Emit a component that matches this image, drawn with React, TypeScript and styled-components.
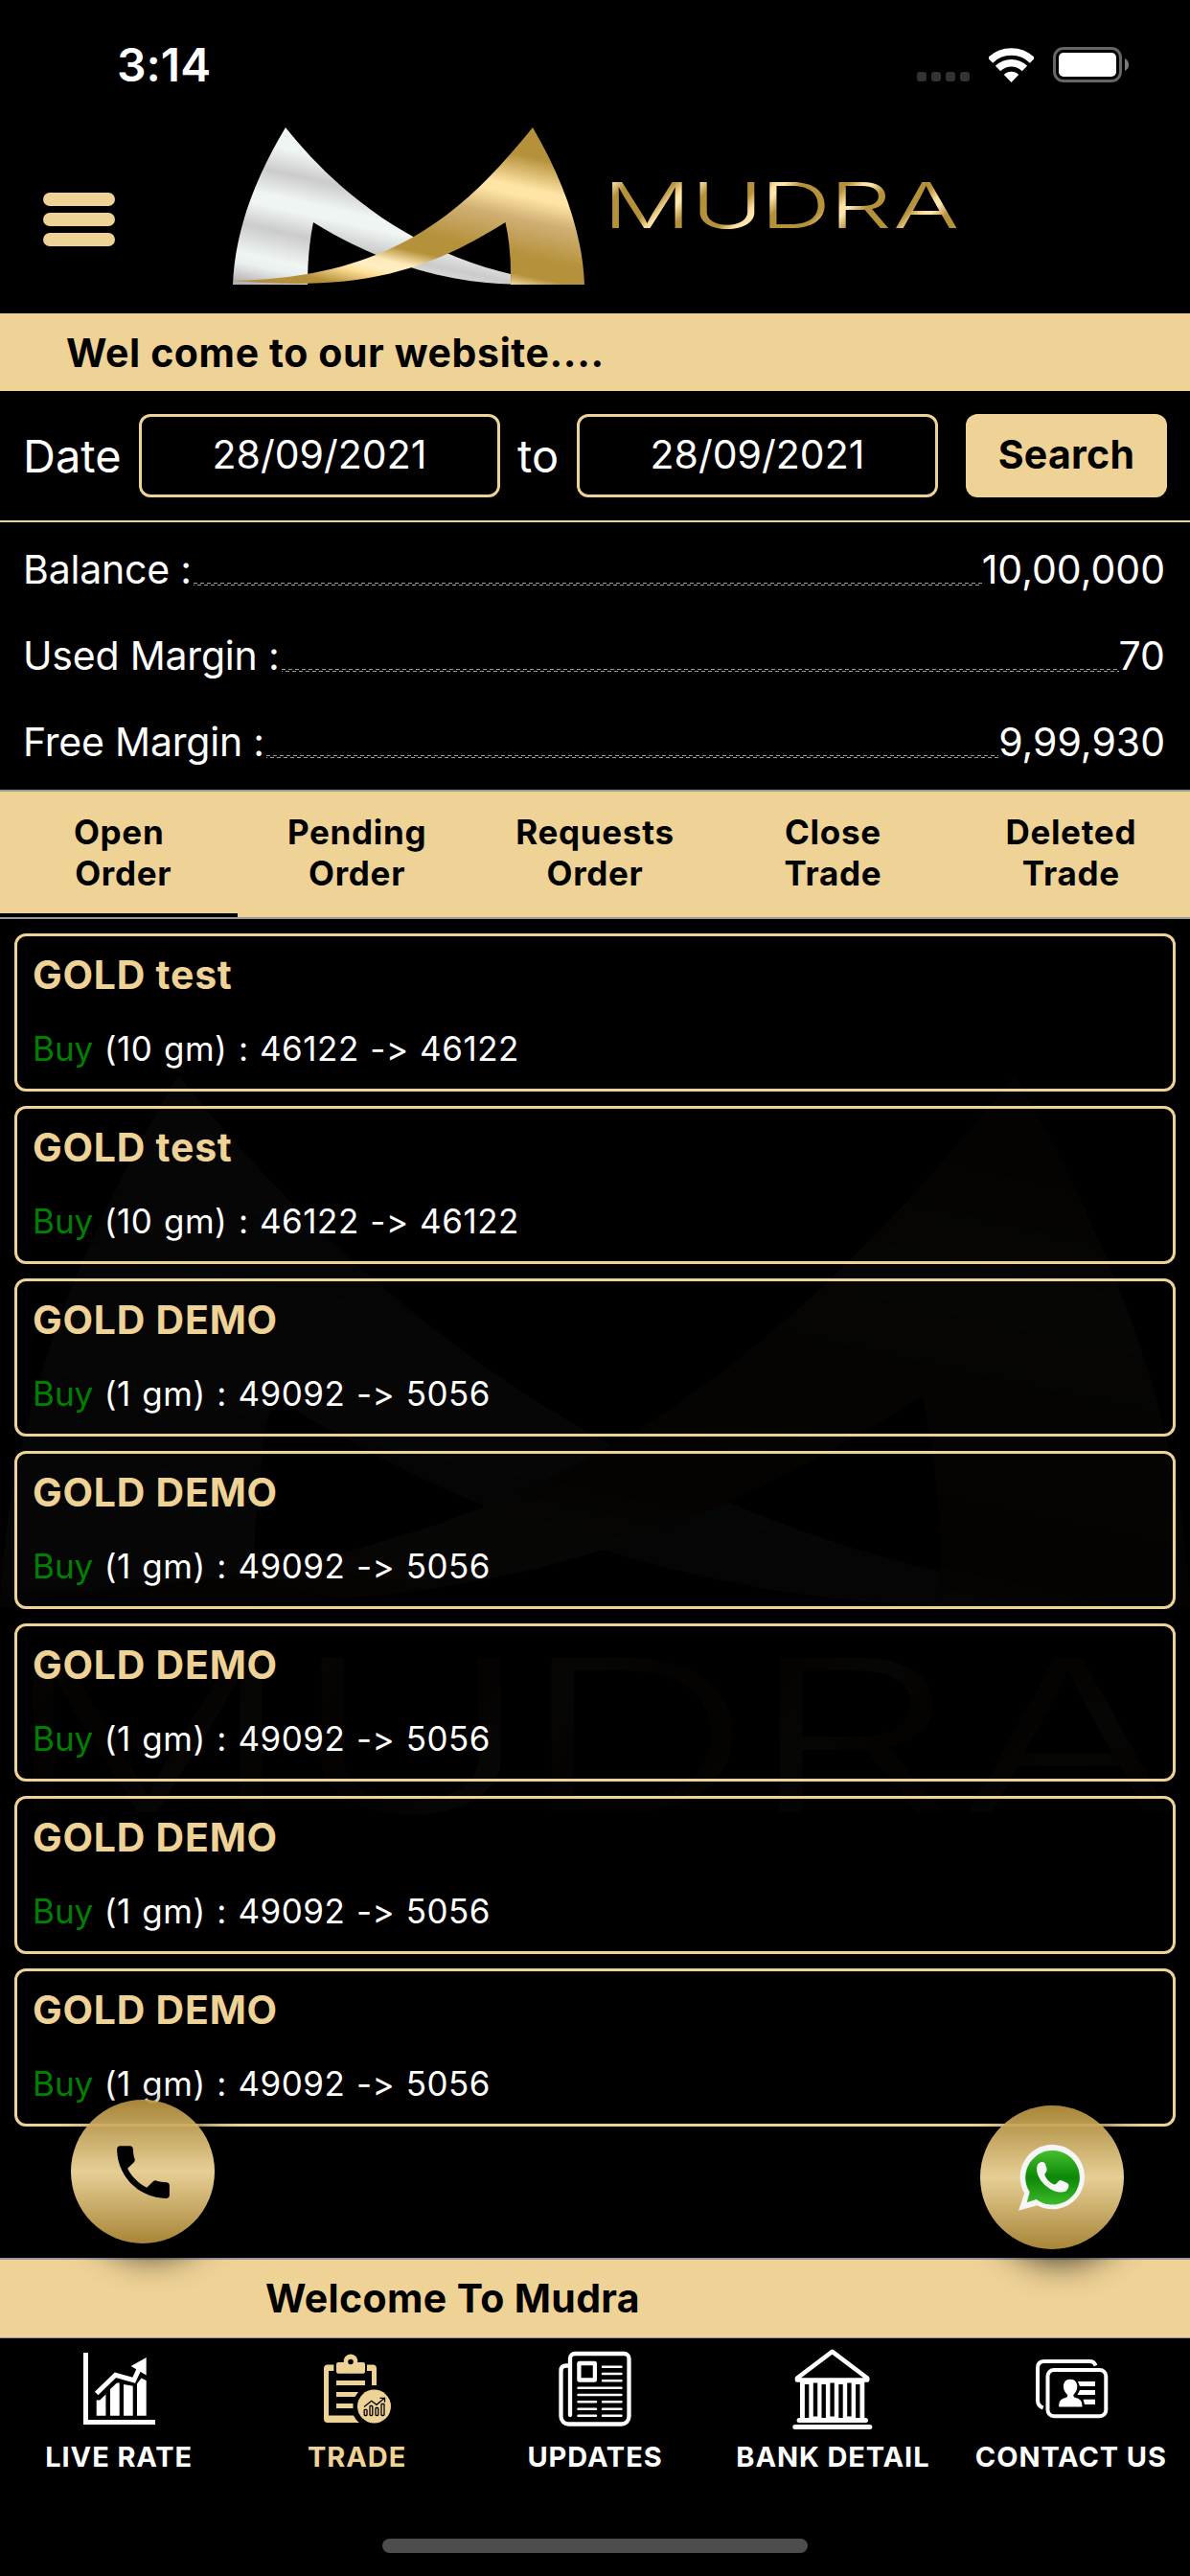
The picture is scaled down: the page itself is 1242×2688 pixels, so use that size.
import { ReactNode } from "react";
import styled, { createGlobalStyle } from "styled-components";

const GlobalStyle = createGlobalStyle`
  * {
    box-sizing: border-box;
  }

  body {
    margin: 0;
    background-color: #000000;
    color: #ffffff;
    font-family: Inter, "Liberation Sans", sans-serif;
    font-feature-settings: "calt" 0;
  }
`;

const gold = "#efd296";

const Wrapper = styled.div`
  width: 1242px;
  height: 2688px;
  overflow: hidden;

  display: flex;
  flex-direction: column;
`;

const StatusBar = styled.div`
  height: 133px;
  padding: 2px 63px 0 122px;

  display: flex;
  align-items: center;
  justify-content: space-between;
`;

const Time = styled.span`
  font-size: 48px;
  font-weight: 600;
`;

const StatusIcons = styled.div`
  display: flex;
  align-items: center;
  gap: 20px;
`;

const SignalDots = styled.div`
  display: flex;
  gap: 5px;
  padding-top: 25px;
`;

const SignalDot = styled.span`
  width: 10px;
  height: 10px;
  border-radius: 3px;
  background-color: #333333;
`;

const Header = styled.header`
  height: 194px;
  padding-left: 45px;

  display: flex;
  align-items: flex-start;
`;

const MenuButton = styled.button`
  width: 75px;
  margin: 68px 123px 0 0;
  padding: 0;
  border: none;
  background: none;

  display: flex;
  flex-direction: column;
  gap: 7px;
`;

const MenuBar = styled.span`
  width: 100%;
  height: 14px;
  border-radius: 7px;
  background-color: ${gold};
`;

const Notice = styled.div`
  height: 81px;
  padding-left: 69px;
  background-color: ${gold};
  color: #000000;

  display: flex;
  align-items: center;

  font-size: 41px;
  font-weight: 700;
  letter-spacing: 0.6px;
`;

const SearchRow = styled.div`
  height: 137px;
  padding: 0 24px;
  border-bottom: 2px solid ${gold};

  display: flex;
  align-items: center;
`;

const SearchLabel = styled.span<{ $width: number }>`
  width: ${(props) => props.$width}px;
  font-size: 47px;
`;

const ToLabel = styled(SearchLabel)`
  padding-left: 18px;
`;

const DateBox = styled.div`
  width: 377px;
  height: 87px;
  padding-bottom: 3px;
  border: 3px solid ${gold};
  border-radius: 12px;

  display: flex;
  align-items: center;
  justify-content: center;

  font-size: 41px;
`;

const SearchBtn = styled.button`
  width: 210px;
  height: 87px;
  margin-left: auto;
  padding: 0 0 3px;
  border: none;
  border-radius: 12px;
  background-color: ${gold};

  color: #000000;
  font-family: inherit;
  font-size: 41px;
  font-weight: 700;
  letter-spacing: 0.3px;
`;

const Summary = styled.div`
  height: 279px;
  padding: 4px 26px 0 24px;
`;

const SummaryRow = styled.div`
  height: 90px;

  display: flex;
  align-items: center;

  font-size: 41px;
`;

const SummaryLabel = styled.span`
  letter-spacing: -0.2px;
`;

const Leader = styled.span`
  flex: 1;
  height: 3px;
  margin: 31px 0 0 2px;
  background-image: linear-gradient(90deg, #999999 4px, transparent 4px),
    linear-gradient(90deg, #999999 4px, transparent 4px);
  background-size: 7px 1px;
  background-position: 0 0, 4px 2px;
  background-repeat: repeat-x;
`;

const Tabs = styled.nav`
  height: 135px;
  border-top: 2px solid #999999;
  border-bottom: 2px solid #999999;
  background-color: ${gold};

  display: grid;
  grid-template-columns: repeat(5, 1fr);
`;

const Tab = styled.div<{ $active: boolean }>`
  border-bottom: 4px solid ${(props) => (props.$active ? "#000000" : gold)};

  display: flex;
  align-items: center;
  justify-content: center;

  color: #000000;
  font-size: 35px;
  font-weight: 700;
  letter-spacing: 0.7px;
  line-height: 43px;
  text-align: center;
  white-space: pre;
`;

const Orders = styled.main`
  position: relative;
  height: 1397px;
  padding: 15px;

  display: flex;
  flex-direction: column;
  gap: 15px;
`;

const Watermark = styled.div`
  position: absolute;
  top: 163px;
  left: 0;
  opacity: 0.022;
`;

const Order = styled.article`
  position: relative;
  height: 165px;
  padding: 15px 16px 0;
  border: 3px solid ${gold};
  border-radius: 12px;
`;

const OrderTitle = styled.h2`
  margin: 0 0 30px;
  color: ${gold};
  font-size: 41px;
  font-weight: 700;
  letter-spacing: 0.75px;
  line-height: 50px;
`;

const OrderText = styled.p`
  margin: 0;
  font-size: 35px;
  line-height: 44px;
  letter-spacing: 0.5px;
  word-spacing: 1.2px;
`;

const Side = styled.span`
  color: #008000;
  letter-spacing: 0;
`;

const FloatingBtn = styled.button<{ $left: number; $top: number }>`
  position: absolute;
  left: ${(props) => props.$left}px;
  top: ${(props) => props.$top}px;
  z-index: 1;
  width: 150px;
  height: 150px;
  padding: 0;
  border: none;
  border-radius: 50%;
  background: linear-gradient(
    rgba(180, 144, 60, 0.93),
    rgba(248, 222, 160, 0.93) 50%,
    rgba(180, 144, 60, 0.93)
  );
  box-shadow: 9px 12px 36px rgba(0, 0, 0, 0.8);

  display: flex;
  align-items: center;
  justify-content: center;
`;

const Footer = styled.div`
  height: 84px;
  padding-left: 277px;
  border-top: 2px solid #999999;
  border-bottom: 1px solid #999999;
  background-color: ${gold};

  color: #000000;
  font-size: 41px;
  font-weight: 700;
  letter-spacing: 0.35px;
  line-height: 80px;
`;

const BottomNav = styled.nav`
  height: 209px;
  padding-top: 11px;

  display: grid;
  grid-template-columns: repeat(5, 1fr);
`;

const NavItem = styled.div<{ $active?: boolean }>`
  color: ${(props) => (props.$active ? gold : "#ffffff")};

  display: flex;
  flex-direction: column;
  align-items: center;
  gap: 11px;
`;

const NavLabel = styled.span`
  font-size: 29px;
  font-weight: 700;
  line-height: 36px;
  letter-spacing: 0.9px;
  white-space: nowrap;
`;

const HomeIndicator = styled.div`
  width: 444px;
  height: 15px;
  margin: 0 auto;
  border-radius: 8px;
  background-color: #4d4d4d;
`;

const ChartIcon = () => (
  <svg width="84" height="84" viewBox="0 0 84 84">
    <path fill="currentColor" d="M5 4h5v70h70v5H5z" />
    <path
      fill="currentColor"
      d="M18.7 53.5h3.5l6.2-6v22.2h-9.7zM33 42l7-6.5h2.7v34.2H33zM47 37l9.7 1.8v30.9H47zM61 36.5l4.5-6 5.2 2.5v36.7H61z"
    />
    <path
      fill="none"
      stroke="currentColor"
      strokeWidth="5"
      d="M18.7 46.5 38.5 27.3l19.2 5.4L64.5 18"
    />
    <path fill="currentColor" d="M70.7 9v18.5L54.7 18z" />
  </svg>
);

const TradeIcon = () => (
  <svg width="84" height="84" viewBox="0 0 84 84">
    <g fill="currentColor">
      <path d="M17.4 16.5H11q-4 0-4 4V73q0 4 4 4h33q-4-3-6-7.5H12V23h5.4zM52 16.5h6q4 0 4 4V38h-5V23h-5z" />
      <path
        fillRule="evenodd"
        d="M22 14h5.8a7.3 7.3 0 1 1 14.4 0H48q2 0 2 2v7.7q0 2-2 2H22q-2 0-2-2V16q0-2 2-2zm13-3.3a2.8 2.8 0 1 0 0 5.6 2.8 2.8 0 0 0 0-5.6z"
      />
      <path d="M20 33h30v5H20zM20 45h23l-3.5 5H20zM20 57h17.5v5H20z" />
      <circle cx="59.5" cy="60" r="17.5" />
    </g>
    <g fill="none" stroke="#000000" strokeWidth="1.3">
      <path d="m49 60.5 7.7-6.2 5.3 4L69.5 52M65.5 51.3h5v4.4" />
      <rect x="49.2" y="63.3" width="2.8" height="6.2" rx="0.8" />
      <rect x="55" y="59.5" width="2.8" height="10" rx="0.8" />
      <rect x="61" y="61.5" width="2.8" height="8" rx="0.8" />
      <rect x="67" y="57.5" width="3" height="12" rx="0.8" />
    </g>
  </svg>
);

const NewsIcon = () => (
  <svg
    width="84"
    height="84"
    viewBox="0 0 84 84"
    fill="none"
    stroke="currentColor"
    strokeLinecap="round"
  >
    <path
      strokeWidth="4.3"
      d="M16 69V10a5 5 0 0 1 5-5h51.5a5 5 0 0 1 5 5v60.5a8 8 0 0 1-8 8H14.5a8 8 0 0 1-8-8V23q0-5.5 5.5-5.5h3"
    />
    <rect x="25.4" y="15" width="16.5" height="17.5" strokeWidth="4.3" rx="0.5" />
    <path
      strokeWidth="2.5"
      d="M50 18.7h19.5M50 26h19.5M50 33.3h19.5M24.5 40.7h45M24.5 48h45M24.5 55.3h18.5M50 55.3h19.5M24.5 62.7h18.5M50 62.7h19.5M24.5 69.8h18.5M50 69.8h19.5"
    />
  </svg>
);

const bankSlots = [12.9, 21.8, 30.5, 39.4, 48.3, 57.2, 66.1];

const BankIcon = () => (
  <svg width="84" height="84" viewBox="0 0 84 84">
    <path
      fill="none"
      stroke="currentColor"
      strokeWidth="4.6"
      strokeLinejoin="round"
      d="M41.6 2.8 5 30.5v2h73.2v-2z"
    />
    <path fill="currentColor" d="M8 33h67.3v40H8z" />
    {bankSlots.map((x, i) => (
      <rect
        key={x}
        x={x}
        y={i % 2 === 0 ? 37 : 35.5}
        width="4.4"
        height="35"
        fill="#000000"
      />
    ))}
    <rect x="4.6" y="72" width="74.4" height="5" rx="2.5" fill="currentColor" />
    <rect x="0.3" y="79" width="83" height="5" rx="2.5" fill="currentColor" />
  </svg>
);

const ContactIcon = () => (
  <svg width="84" height="84" viewBox="0 0 84 84">
    <g fill="none" stroke="currentColor" strokeWidth="4">
      <path d="M67.5 17.5Q66 13 61.5 13H14q-7 0-7 7v33.5q0 6 5.7 8" />
      <rect x="17.5" y="22" width="60.8" height="48.3" rx="6.5" />
    </g>
    <g fill="currentColor">
      <path d="M41 31.7c5 0 7.3 3.5 7.3 7.6 0 3.7-2 6.8-4 8.7 0 2 .7 2.6 3.2 3.3 4.5 1.2 6 3.5 6 9.2H29.2c0-5.7 1.5-8 6-9.2 2.5-.7 3-1.3 3-3.3-2.2-1.9-4.3-5-4.3-8.7 0-4.1 2.2-7.6 7.1-7.6z" />
      <path d="M49 34h18v5H51zM51 43h16v5H48.5zM54.5 52.7H67V58H56z" />
    </g>
  </svg>
);

const PhoneIcon = () => (
  <svg width="73" height="73" viewBox="0 0 24 24" fill="#000000">
    <path d="M6.62 10.79c1.44 2.83 3.76 5.14 6.59 6.59l2.2-2.2c.27-.27.67-.36 1.02-.24 1.12.37 2.33.57 3.57.57.55 0 1 .45 1 1V20c0 .55-.45 1-1 1-9.39 0-17-7.61-17-17 0-.55.45-1 1-1h3.5c.55 0 1 .45 1 1 0 1.25.2 2.45.57 3.57.11.35.03.74-.25 1.02l-2.2 2.2z" />
  </svg>
);

const WhatsappIcon = () => (
  <svg width="70" height="70" viewBox="0 0 70 70">
    <defs>
      <linearGradient id="waGreen" x1="0" y1="0" x2="0" y2="1">
        <stop offset="0" stopColor="#45c02e" />
        <stop offset="0.5" stopColor="#0c8707" />
        <stop offset="1" stopColor="#3dbb2a" />
      </linearGradient>
    </defs>
    <path
      fill="#f6f6f6"
      d="M0 69.7 6.2 51.5A33.7 33.7 0 1 1 19.5 64.3z"
    />
    <path
      fill="url(#waGreen)"
      d="M8.7 61.3l3-10.8A28.3 28.3 0 1 1 18.7 58z"
    />
    <path
      fill="#f6f6f6"
      d="M24 19Q19 20 19 26C19 38 33 51 45 50.5Q52 50 52.5 43.5 52.5 41.5 50 40.5L45 38.2Q43 37.5 41.5 39.5L39 42Q37.5 43 35 41.5 29.5 38 27.5 33 26.8 31.5 28.5 30 30 28 29.5 26L28 21Q27 18.5 24 19Z"
    />
  </svg>
);

const WifiIcon = () => (
  <svg width="47" height="36" viewBox="0 0 47 36">
    <clipPath id="wifiWedge">
      <path d="M23.5 36-3 8.5V-6h53V8.5z" />
    </clipPath>
    <g clipPath="url(#wifiWedge)" fill="none" stroke="#ffffff" strokeWidth="7.5">
      <circle cx="23.5" cy="35.5" r="31.5" />
      <circle cx="23.5" cy="35.5" r="19.8" />
      <circle cx="23.5" cy="35.5" r="5.4" strokeWidth="10.8" />
    </g>
  </svg>
);

const BatteryIcon = () => (
  <svg width="80" height="37" viewBox="0 0 80 37">
    <rect
      x="1.5"
      y="1.5"
      width="69"
      height="34"
      rx="9.5"
      fill="none"
      stroke="#666666"
      strokeWidth="3"
    />
    <rect x="6" y="6" width="60" height="25" rx="5" fill="#ffffff" />
    <path fill="#7a7a7a" d="M75 12q4 2 4 6.5T75 25z" />
  </svg>
);

const LogoMark = ({ id }: { id: string }) => (
  <>
    <defs>
      <linearGradient
        id={`${id}Silver`}
        gradientUnits="userSpaceOnUse"
        x1="55"
        y1="0"
        x2="19"
        y2="164"
      >
        <stop offset="0" stopColor="#eff5f3" />
        <stop offset="0.13" stopColor="#eff5f3" />
        <stop offset="0.28" stopColor="#cbcbcb" />
        <stop offset="0.43" stopColor="#eff5f3" />
        <stop offset="0.5" stopColor="#eff5f3" />
        <stop offset="0.64" stopColor="#cbcbcb" />
        <stop offset="0.82" stopColor="#eff5f3" />
        <stop offset="0.88" stopColor="#eaf0ee" />
        <stop offset="1" stopColor="#b7b0b8" />
      </linearGradient>
      <linearGradient
        id={`${id}Gold`}
        gradientUnits="userSpaceOnUse"
        x1="313"
        y1="0"
        x2="266"
        y2="213"
      >
        <stop offset="0" stopColor="#b5913b" />
        <stop offset="0.14" stopColor="#b5913b" />
        <stop offset="0.29" stopColor="#ffe5a5" />
        <stop offset="0.33" stopColor="#ffe5a5" />
        <stop offset="0.44" stopColor="#d0af74" />
        <stop offset="0.61" stopColor="#b5913b" />
        <stop offset="0.7" stopColor="#b5913b" />
        <stop offset="0.77" stopColor="#feeab8" />
        <stop offset="0.81" stopColor="#ffefc6" />
        <stop offset="0.85" stopColor="#ffdf98" />
        <stop offset="0.93" stopColor="#b5913b" />
      </linearGradient>
    </defs>
    <path
      fill={`url(#${id}Silver)`}
      d="M55 0C95 50 170 125 290 153V163.5C220 162 150 140 84 99Q78 128 78 164H0C2 110 22 55 55 0Z"
    />
    <path
      fill={`url(#${id}Gold)`}
      d="M313 0C240 90 165 157 0 160 130 171 200 152 284.5 99Q291 128 290 164H367C365 110 345 55 313 0Z"
    />
  </>
);

const Wordmark = ({ id }: { id: string }) => (
  <>
    <defs>
      <linearGradient
        id={`${id}Word`}
        gradientUnits="userSpaceOnUse"
        x1="0"
        y1="-48"
        x2="42"
        y2="-22"
        spreadMethod="repeat"
      >
        <stop offset="0" stopColor="#ffe9b0" />
        <stop offset="0.2" stopColor="#b5913b" />
        <stop offset="0.72" stopColor="#b5913b" />
        <stop offset="0.9" stopColor="#ffe0a0" />
        <stop offset="1" stopColor="#ffe9b0" />
      </linearGradient>
    </defs>
    <text
      transform="scale(1.57 1)"
      x="-5.5 53 99 145 187.5"
      fontFamily="Inter"
      fontSize="65.3"
      fontWeight="300"
      fill={`url(#${id}Word)`}
    >
      MUDRA
    </text>
  </>
);

const HeaderLogo = () => (
  <svg width="800" height="165" viewBox="0 0 800 165">
    <LogoMark id="head" />
    <g transform="translate(395 105)">
      <Wordmark id="head" />
    </g>
  </svg>
);

const WatermarkLogo = () => (
  <svg width="1242" height="780" viewBox="0 0 1242 780">
    <g transform="scale(3.384)">
      <LogoMark id="mark" />
    </g>
    <g transform="translate(30 769) scale(3.3 3.4)">
      <Wordmark id="mark" />
    </g>
  </svg>
);

const summary = [
  { label: "Balance :", value: "10,00,000" },
  { label: "Used Margin :", value: "70" },
  { label: "Free Margin :", value: "9,99,930" },
];

const tabs = [
  "Open\n Order",
  "Pending\nOrder",
  "Requests\nOrder",
  "Close\nTrade",
  "Deleted\nTrade",
];

const goldTest = { title: "GOLD test", detail: "(10 gm) : 46122 -> 46122" };
const goldDemo = { title: "GOLD DEMO", detail: "(1 gm) : 49092 -> 5056" };
const orders = [
  goldTest,
  goldTest,
  goldDemo,
  goldDemo,
  goldDemo,
  goldDemo,
  goldDemo,
];

type NavEntry = {
  label: string;
  icon: ReactNode;
  active?: boolean;
};

const navItems: NavEntry[] = [
  { label: "LIVE RATE", icon: <ChartIcon /> },
  { label: "TRADE", icon: <TradeIcon />, active: true },
  { label: "UPDATES", icon: <NewsIcon /> },
  { label: "BANK DETAIL", icon: <BankIcon /> },
  { label: "CONTACT US", icon: <ContactIcon /> },
];

export default function App() {
  return (
    <Wrapper>
      <GlobalStyle />
      <StatusBar>
        <Time>3:14</Time>
        <StatusIcons>
          <SignalDots>
            <SignalDot />
            <SignalDot />
            <SignalDot />
            <SignalDot />
          </SignalDots>
          <WifiIcon />
          <BatteryIcon />
        </StatusIcons>
      </StatusBar>
      <Header>
        <MenuButton aria-label="Menu">
          <MenuBar />
          <MenuBar />
          <MenuBar />
        </MenuButton>
        <HeaderLogo />
      </Header>
      <Notice>Wel come to our website....</Notice>
      <SearchRow>
        <SearchLabel $width={121}>Date</SearchLabel>
        <DateBox>28/09/2021</DateBox>
        <ToLabel $width={80}>to</ToLabel>
        <DateBox>28/09/2021</DateBox>
        <SearchBtn>Search</SearchBtn>
      </SearchRow>
      <Summary>
        {summary.map((row) => (
          <SummaryRow key={row.label}>
            <SummaryLabel>{row.label}</SummaryLabel>
            <Leader />
            <span>{row.value}</span>
          </SummaryRow>
        ))}
      </Summary>
      <Tabs>
        {tabs.map((tab, index) => (
          <Tab key={tab} $active={index === 0}>
            {tab}
          </Tab>
        ))}
      </Tabs>
      <Orders>
        <Watermark>
          <WatermarkLogo />
        </Watermark>
        {orders.map((order, index) => (
          <Order key={index}>
            <OrderTitle>{order.title}</OrderTitle>
            <OrderText>
              <Side>Buy</Side> {order.detail}
            </OrderText>
          </Order>
        ))}
        <FloatingBtn $left={74} $top={1232} aria-label="Call">
          <PhoneIcon />
        </FloatingBtn>
        <FloatingBtn $left={1023} $top={1238} aria-label="WhatsApp">
          <WhatsappIcon />
        </FloatingBtn>
      </Orders>
      <Footer>Welcome To Mudra</Footer>
      <BottomNav>
        {navItems.map((item) => (
          <NavItem key={item.label} $active={item.active}>
            {item.icon}
            <NavLabel>{item.label}</NavLabel>
          </NavItem>
        ))}
      </BottomNav>
      <HomeIndicator />
    </Wrapper>
  );
}
